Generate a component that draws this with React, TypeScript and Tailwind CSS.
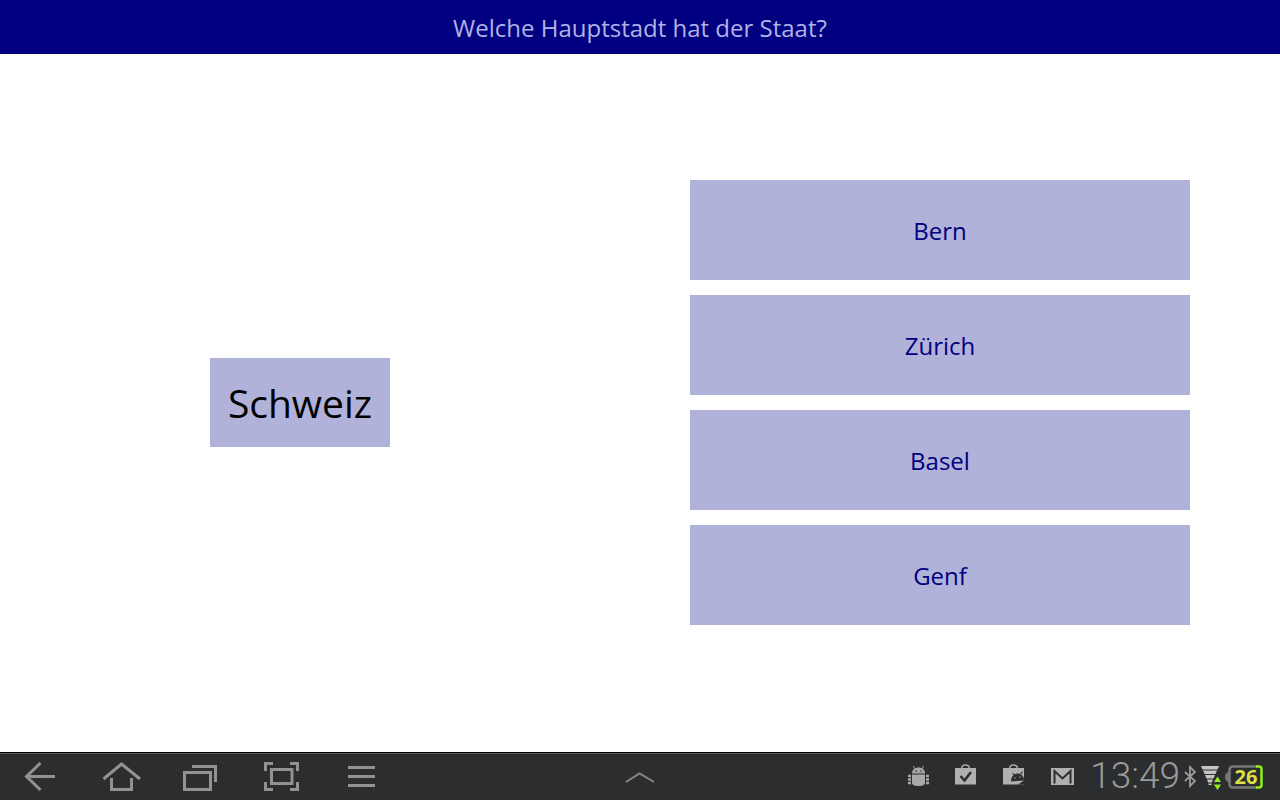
import React, { useState } from 'react';

const answers = ['Bern', 'Zürich', 'Basel', 'Genf'];

const navItems = [
    { label: 'Back', path: 'M55 24.5H27M40.5 11L26.5 24.5L40.5 38' },
    { label: 'Home', path: 'M23.5 27L41.5 12L60 27M31.5 26V37.5H51.5V26' },
    { label: 'Recent apps', path: 'M24.5 20.5H50.5V37.5H24.5ZM32 14.5H55.5V30' },
    { label: 'Screenshot', path: 'M25.5 19V11.5H33M50 11.5H57.5V19M57.5 30V37.5H50M33 37.5H25.5V30M31.5 17.5H52V31.5H31.5Z' },
    { label: 'Menu', path: 'M28 15.5H55M28 24.5H55M28 33.5H55' },
];

function BugIcon() {
    return (
        <svg className="w-12 h-[46px]" viewBox="0 2 48 46" fill="#a8a8a8">
            <path d="M18 21.500c0-4 3-6 6.500-6s6.500 2 6.500 6z" />
            <path d="M20.500 16.500l-1-2.500M28.500 16.500l1-2.500" stroke="#a8a8a8" strokeWidth="1" />
            <path d="M18 22.500h13v8c0 2.500-2 3.500-6.500 3.500S18 33 18 30.500z" />
            <path d="M14 24h3M14 27.500h3M14 31h3M32 24h3M32 27.500h3M32 31h3" stroke="#a8a8a8" strokeWidth="2.500" />
            <circle cx="22" cy="19" r="0.800" fill="#2c2d2f" />
            <circle cx="27" cy="19" r="0.800" fill="#2c2d2f" />
        </svg>
    );
}

function BagCheckIcon() {
    return (
        <svg className="w-12 h-[46px]" viewBox="0 2 48 46" fill="none">
            <path d="M19.500 17c0-5.500 8-5.500 8 0" stroke="#a8a8a8" strokeWidth="1.500" />
            <path d="M13 16h21v16.500H13z" fill="#b0b0b0" />
            <path d="M18.500 24l4 4.500L29 20" stroke="#2c2d2f" strokeWidth="2.500" />
        </svg>
    );
}

function BagUpdateIcon() {
    return (
        <svg className="w-12 h-[46px]" viewBox="0 2 48 46" fill="none">
            <path d="M19.500 17c0-5.500 8-5.500 8 0" stroke="#a8a8a8" strokeWidth="1.500" />
            <path d="M13 16h21v16.500H13z" fill="#b0b0b0" />
            {/* Robot head peeking over the corner */}
            <path d="M21 29.500c0-5 3-8 6.500-8 3.500 0 6 2.500 6.500 6v1z" fill="#2c2d2f" />
            <path d="M22.500 21l2 2.500M32.500 19.500l-2 3" stroke="#2c2d2f" strokeWidth="1.200" />
            <path d="M28 32.500l6-4v4z" fill="#2c2d2f" />
            <circle cx="25" cy="26" r="0.700" fill="#b0b0b0" />
            <circle cx="30" cy="25" r="0.700" fill="#b0b0b0" />
        </svg>
    );
}

function MailIcon() {
    return (
        <svg className="w-12 h-[46px]" viewBox="0 2 48 46" fill="none">
            <path d="M13 16h23v17H13z" fill="#b0b0b0" />
            <path d="M16.500 31.500V19l8 7.500 8-7.500v12.500" stroke="#2c2d2f" strokeWidth="2" />
        </svg>
    );
}

function BluetoothIcon() {
    return (
        <svg className="w-3 h-6" viewBox="0 0 12 24" fill="none" stroke="#9a9a9a" strokeWidth="1.800">
            <path d="M1 7l10 9-5 5V2l5 5L1 16" />
        </svg>
    );
}

function WifiIcon() {
    return (
        <svg className="w-5 h-7" viewBox="0 0 20 28">
            <path d="M0 3h18l-1.500 3.500h-15zM2 7.500h14l-1.500 3.500h-11zM4 12h10l-1.500 3.500h-7zM6 16.500h6l-1.200 3H7.200zM7.500 20.500h3V22h-3z" fill="#c4c4c4" />
            <path d="M13 19l3.500-5.500L20 19zM13 21.500h7L16.500 27z" fill="#8cf01e" />
        </svg>
    );
}

function Battery() {
    return (
        <div className="relative w-[38px] h-6 flex items-center justify-center">
            <svg className="absolute inset-0" viewBox="0 0 38 24" fill="none">
                <path d="M4 7C1.500 7.500 0 9 0 12s1.500 4.500 4 5z" fill="#777" />
                <path d="M32 1.500H8Q4.500 1.500 4.500 5V19Q4.500 22.500 8 22.500H32" stroke="#777" strokeWidth="2.500" />
                <path d="M31 1.500h3Q36.500 1.500 36.500 4V20Q36.500 22.500 34 22.500h-3" stroke="#8cf01e" strokeWidth="2.500" />
            </svg>
            <span className="relative pl-1 font-bold text-xl leading-6 text-[#dede48]">26</span>
        </div>
    );
}

export default function App() {
    const [selected, setSelected] = useState<string | null>(null);

    return (
        <div className="min-h-screen flex flex-col bg-white font-['Open_Sans','Noto_Sans',sans-serif]">
            {/* Question */}
            <header className="bg-[#000080] h-[54px] pt-0.5 flex items-center justify-center">
                <h1 className="text-2xl font-medium text-[#b0b2e8]">Welche Hauptstadt hat der Staat?</h1>
            </header>

            <main className="flex-1 pb-0.5 grid grid-cols-[15fr_17fr] items-center">
                <div className="flex justify-center">
                    <div className="bg-[#b1b2d9] px-[18px] py-4 text-[39px] leading-[57px] font-medium text-black">Schweiz</div>
                </div>

                {/* Answers */}
                <div className="flex flex-col gap-[15px] px-[90px]">
                    {answers.map((answer) => (
                        <button
                            key={answer}
                            onClick={() => setSelected(answer)}
                            aria-pressed={selected === answer}
                            className="h-[100px] pt-0.5 bg-[#b1b2d9] text-2xl font-medium text-[#000080] cursor-pointer"
                        >
                            {answer}
                        </button>
                    ))}
                </div>
            </main>

            {/* System bar */}
            <footer className="h-12 bg-[#2c2d2f] border-t border-black grid grid-cols-[1fr_auto_1fr]">
                <nav className="flex border-t border-[#55565a]">
                    {navItems.map((item) => (
                        <button key={item.label} aria-label={item.label} className="cursor-pointer">
                            <svg className="w-20 h-[46px]" viewBox="0 2 80 46" fill="none" stroke="#929292" strokeWidth="3">
                                <path d={item.path} />
                            </svg>
                        </button>
                    ))}
                </nav>

                <button aria-label="Show apps" className="border-t border-[#55565a] cursor-pointer">
                    <svg className="w-10 h-[46px]" viewBox="0 2 40 46" fill="none" stroke="#888" strokeWidth="2">
                        <path d="M6 30L19.500 21.500L34 30" />
                    </svg>
                </button>

                <div className="flex items-center justify-end border-t border-[#55565a] pr-[17px]">
                    <BugIcon />
                    <BagCheckIcon />
                    <BagUpdateIcon />
                    <MailIcon />
                    <time className="pl-1 pr-1 pb-0.5 font-['Roboto',sans-serif] font-light text-[37px] leading-10 text-[#9a9a9a]">13:49</time>
                    <BluetoothIcon />
                    <div className="pl-[5px] pr-1">
                        <WifiIcon />
                    </div>
                    <Battery />
                </div>
            </footer>
        </div>
    );
}
